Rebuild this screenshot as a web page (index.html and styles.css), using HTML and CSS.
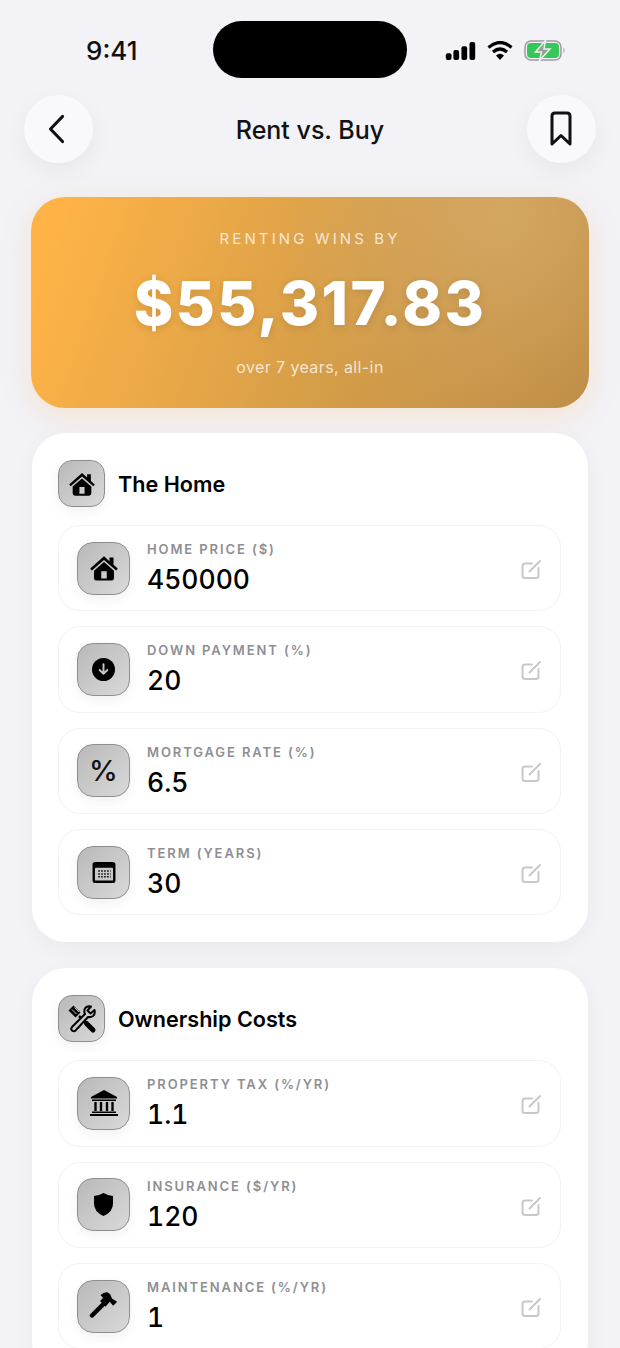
FILE: index.html
```html
<!DOCTYPE html>
<html lang="en">
<head>
  <meta charset="UTF-8">
  <meta name="viewport" content="width=device-width, initial-scale=1.0">
  <title>Rent vs. Buy</title>
  <link rel="stylesheet" href="styles.css">
</head>
<body>
  <svg class="sprites" width="0" height="0">
    <symbol id="i-home" viewBox="0 0 24 24">
      <path d="M12 2.6 L1 12.4 L2.3 14 L12 5.5 L21.7 14 L23 12.4 L19.6 9.4 V3.6 H16.4 V6.5 Z"/>
      <path fill-rule="evenodd" d="M12 7.2 L20 14.2 V20 Q20 22 18 22 H6 Q4 22 4 20 V14.2 Z M9.8 14.6 V20.4 H14.2 V14.6 Z"/>
    </symbol>
    <symbol id="i-edit" viewBox="0 0 24 24">
      <path d="M14 7.5 H7 Q4.500 7.500 4.500 10 V19.500 Q4.500 22 7 22 H18 Q20.500 22 20.500 19.500 V12" fill="none" stroke="currentColor" stroke-width="2" stroke-linecap="round"/>
      <path d="M11.500 15.500 L22 5" fill="none" stroke="currentColor" stroke-width="2" stroke-linecap="round"/>
    </symbol>
  </svg>

  <div class="screen">
    <div class="status-bar">
      <span class="time">9:41</span>
      <div class="island"></div>
      <div class="status-icons">
        <svg width="31" height="18" viewBox="0 0 31 19"><rect x="0" y="12" width="6" height="7" rx="2"/><rect x="8" y="8.5" width="6" height="10.5" rx="2"/><rect x="16.5" y="4.5" width="6" height="14.5" rx="2"/><rect x="25" y="0" width="6" height="19" rx="2"/></svg>
        <svg width="26" height="19" viewBox="0 0 26 19"><path d="M1.5 6.5 Q13 -3.5 24.500 6.500" fill="none" stroke="#000" stroke-width="3.200"/><path d="M6 11 Q13 5 20 11" fill="none" stroke="#000" stroke-width="3.200"/><path d="M9 14.500 Q13 11 17 14.500 L13 19 Z"/></svg>
        <svg width="42" height="21" viewBox="0 0 42 21">
          <rect x="1" y="1" width="36" height="19" rx="6" fill="none" stroke="#9b9b9b" stroke-width="1.500"/>
          <rect x="3" y="3" width="32" height="15" rx="4" fill="#35c759"/>
          <path d="M39.500 7.500 Q41.500 10.500 39.500 13.500 Z" fill="#9b9b9b"/>
          <path d="M21.500 0.500 L11.500 12 H17.500 L15.500 20.500 L26 9 H20 Z" fill="#9a9a9a" stroke="#e6f5e9" stroke-width="1.500"/>
        </svg>
      </div>
    </div>

    <div class="nav-bar">
      <button class="round-button">
        <svg width="22" height="32" viewBox="0 0 22 32"><path d="M14.500 3.500 L2.500 16 L14.500 28.500" fill="none" stroke="#111" stroke-width="3.200" stroke-linecap="round" stroke-linejoin="round"/></svg>
      </button>
      <h1 class="nav-title">Rent vs. Buy</h1>
      <button class="round-button">
        <svg width="24" height="36" viewBox="0 0 24 36"><path d="M3 5 Q3 2 6 2 H18 Q21 2 21 5 V33 L12 24.500 L3 33 Z" fill="none" stroke="#111" stroke-width="3" stroke-linejoin="round"/></svg>
      </button>
    </div>

    <section class="hero">
      <p class="hero-label">RENTING WINS BY</p>
      <p class="hero-amount">$55,317.83</p>
      <p class="hero-note">over 7 years, all-in</p>
    </section>

    <section class="card">
      <div class="card-header">
        <div class="tile tile-small"><svg width="28" height="28"><use href="#i-home"/></svg></div>
        <h2 class="card-title">The Home</h2>
      </div>
      <div class="field">
        <div class="tile"><svg width="30" height="30"><use href="#i-home"/></svg></div>
        <div class="field-text"><span class="field-label">HOME PRICE ($)</span><span class="field-value">450000</span></div>
        <svg class="edit" width="24" height="24"><use href="#i-edit"/></svg>
      </div>
      <div class="field">
        <div class="tile"><svg width="23" height="23" viewBox="0 0 24 24"><circle cx="12" cy="12" r="12"/><path d="M12 6.500 V16.500 M8 12.500 L12 16.500 L16 12.500" fill="none" stroke="#c8c8c8" stroke-width="2" stroke-linecap="round" stroke-linejoin="round"/></svg></div>
        <div class="field-text"><span class="field-label">DOWN PAYMENT (%)</span><span class="field-value">20</span></div>
        <svg class="edit" width="24" height="24"><use href="#i-edit"/></svg>
      </div>
      <div class="field">
        <div class="tile tile-glyph">%</div>
        <div class="field-text"><span class="field-label">MORTGAGE RATE (%)</span><span class="field-value">6.5</span></div>
        <svg class="edit" width="24" height="24"><use href="#i-edit"/></svg>
      </div>
      <div class="field">
        <div class="tile"><svg width="24" height="21" viewBox="0 0 24 22"><rect x="0" y="0" width="24" height="22" rx="3"/><rect x="2.500" y="6" width="19" height="13.500" rx="1" fill="#c8c8c8"/><path d="M6 9.500 H19 M6 12.500 H19 M6 15.500 H19" stroke="#000" stroke-width="1.600" stroke-dasharray="1.600 1.500"/></svg></div>
        <div class="field-text"><span class="field-label">TERM (YEARS)</span><span class="field-value">30</span></div>
        <svg class="edit" width="24" height="24"><use href="#i-edit"/></svg>
      </div>
    </section>

    <section class="card">
      <div class="card-header">
        <div class="tile tile-small"><svg width="30" height="30" viewBox="0 0 30 30">
          <path d="M1.500 6.500 L6.500 1.500 L13.500 8.500 L8.500 13.500 Z"/>
          <path d="M5 5.500 L9.500 10 M7.500 3.500 L12 8" stroke="#c8c8c8" stroke-width="1"/>
          <path d="M12 12 L21 21" stroke="#000" stroke-width="2.500"/>
          <path d="M19.500 19.500 L26 26" stroke="#000" stroke-width="5" stroke-linecap="round"/>
          <path d="M27.500 6 L23.500 9.500 L20.500 6.500 L24 2.500 Q19 1.500 17.500 5.500 Q17 8 18 10 L5 23 Q3.500 25 5 26.500 Q7 28 8.500 26.500 L21 13 Q24 13.500 26 12 Q28.500 10 27.500 6 Z" fill="#cbcbcb" stroke="#000" stroke-width="2" stroke-linejoin="round"/>
        </svg></div>
        <h2 class="card-title">Ownership Costs</h2>
      </div>
      <div class="field">
        <div class="tile"><svg width="28" height="26" viewBox="0 0 28 26"><path d="M14 0 L27 7 V8.500 H1 V7 Z"/><rect x="2" y="9.500" width="24" height="1.500"/><path d="M5.500 12 V21 M11 12 V21 M17 12 V21 M22.500 12 V21" stroke="#000" stroke-width="2.400"/><rect x="2" y="21.500" width="24" height="1.500"/><rect x="0" y="24" width="28" height="2"/></svg></div>
        <div class="field-text"><span class="field-label">PROPERTY TAX (%/YR)</span><span class="field-value">1.1</span></div>
        <svg class="edit" width="24" height="24"><use href="#i-edit"/></svg>
      </div>
      <div class="field">
        <div class="tile"><svg width="19" height="23" viewBox="0 0 20 24"><path d="M10 0 Q15 3 20 3 V11 Q20 20 10 24 Q0 20 0 11 V3 Q5 3 10 0 Z"/></svg></div>
        <div class="field-text"><span class="field-label">INSURANCE ($/YR)</span><span class="field-value">120</span></div>
        <svg class="edit" width="24" height="24"><use href="#i-edit"/></svg>
      </div>
      <div class="field">
        <div class="tile"><svg width="30" height="30" viewBox="0 0 30 30"><path d="M3 24.500 L15.500 12" stroke="#000" stroke-width="4.500" stroke-linecap="round"/><path d="M11.500 4 Q15 1 18.200 1.300 L21 3 L23 7.500 L28.200 10.700 L24.200 14.700 L20.800 10.700 L16.500 15.700 L11 10 L14 7 Z"/></svg></div>
        <div class="field-text"><span class="field-label">MAINTENANCE (%/YR)</span><span class="field-value">1</span></div>
        <svg class="edit" width="24" height="24"><use href="#i-edit"/></svg>
      </div>
    </section>
  </div>
</body>
</html>
```

FILE: styles.css
```css
/* General Reset */
* {
  margin: 0;
  padding: 0;
  box-sizing: border-box;
}

html, body {
  height: 100%;
  overflow: hidden;
}

body {
  font-family: Inter, "Liberation Sans", sans-serif;
  background-color: #f2f2f7;
  color: #000;
}

.sprites {
  position: absolute;
}

.screen {
  height: 100vh;
  overflow: hidden;
  padding: 0 24px;
  display: flex;
  flex-direction: column;
}

/* Status Bar */
.status-bar {
  position: relative;
  flex-shrink: 0;
  height: 95px;
  display: flex;
  justify-content: space-between;
  align-items: flex-start;
  padding: 36px 30px 0 62px;
}

.time {
  font-size: 26px;
  font-weight: 500;
  line-height: 30px;
  color: #111;
}

.island {
  position: absolute;
  left: 189px;
  top: 21px;
  width: 194px;
  height: 57px;
  border-radius: 29px;
  background-color: #000;
}

.status-icons {
  display: flex;
  align-items: center;
  gap: 11px;
  padding-top: 4px;
}

/* Nav */
.nav-bar {
  flex-shrink: 0;
  display: flex;
  justify-content: space-between;
  align-items: center;
  height: 68px;
  margin-bottom: 34px;
}

.round-button {
  width: 69px;
  height: 68px;
  border: none;
  border-radius: 50%;
  background-color: #f9f9fc;
  box-shadow: 0 8px 24px rgba(0, 0, 0, 0.05);
  display: flex;
  justify-content: center;
  align-items: center;
}

.nav-title {
  font-size: 25px;
  font-weight: 500;
  color: #111;
  padding-top: 2px;
}

/* Hero */
.hero {
  flex-shrink: 0;
  margin: 0 7px 25px;
  height: 211px;
  border-radius: 34px;
  background:
    radial-gradient(circle at 85% 8%, rgba(214, 172, 108, 0.75), rgba(214, 172, 108, 0) 45%),
    linear-gradient(110deg, #ffb347 5%, #d69e48 55%, #bc8a42 100%);
  box-shadow: 0 8px 30px rgba(255, 179, 71, 0.22);
  color: #fff;
  text-align: center;
  padding-top: 32px;
}

.hero-label {
  font-size: 15px;
  line-height: 20px;
  letter-spacing: 3.1px;
  color: rgba(255, 255, 255, 0.75);
}

.hero-amount {
  font-size: 60px;
  font-weight: 800;
  line-height: 74px;
  letter-spacing: 2.4px;
  margin-top: 17px;
  text-shadow: 0 2px 8px rgba(0, 0, 0, 0.12);
}

.hero-note {
  font-size: 16px;
  line-height: 20px;
  letter-spacing: 0.4px;
  margin-top: 17px;
  color: rgba(255, 255, 255, 0.75);
}

/* Cards */
.card {
  flex-shrink: 0;
  margin: 0 8px 26px;
  padding: 27px 27px 27px 26px;
  border-radius: 34px;
  background-color: #fff;
  box-shadow: 0 6px 24px rgba(0, 0, 0, 0.04);
  display: flex;
  flex-direction: column;
  gap: 15px;
}

.card-header {
  display: flex;
  align-items: center;
  gap: 13px;
  margin-bottom: 3px;
}

.card-title {
  font-size: 21.6px;
  font-weight: 600;
}

.tile {
  flex-shrink: 0;
  width: 53px;
  height: 53px;
  border-radius: 16px;
  border: 1px solid #8e8e8e;
  background: linear-gradient(135deg, #b9b9b9, #d9d9d9);
  box-shadow: 0 4px 12px rgba(0, 0, 0, 0.06);
  display: flex;
  justify-content: center;
  align-items: center;
}

.tile-small {
  width: 47px;
  height: 47px;
  border-radius: 14px;
}

.tile-glyph {
  font-size: 29px;
  font-weight: 500;
  color: #111;
}

.field {
  height: 86.33px;
  padding: 0 18px;
  border: 1px solid #f3f3f5;
  border-radius: 22px;
  background-color: #fff;
  display: flex;
  align-items: center;
  gap: 17px;
}

.field-text {
  flex: 1;
  display: flex;
  flex-direction: column;
  gap: 5px;
}

.field-label {
  font-size: 13px;
  font-weight: 600;
  line-height: 17px;
  letter-spacing: 1.9px;
  color: #8e8e93;
}

.field-value {
  font-size: 26.5px;
  font-weight: 500;
  line-height: 32px;
  font-variant-numeric: tabular-nums;
}

.edit {
  flex-shrink: 0;
  color: #c7c7cc;
}
```
